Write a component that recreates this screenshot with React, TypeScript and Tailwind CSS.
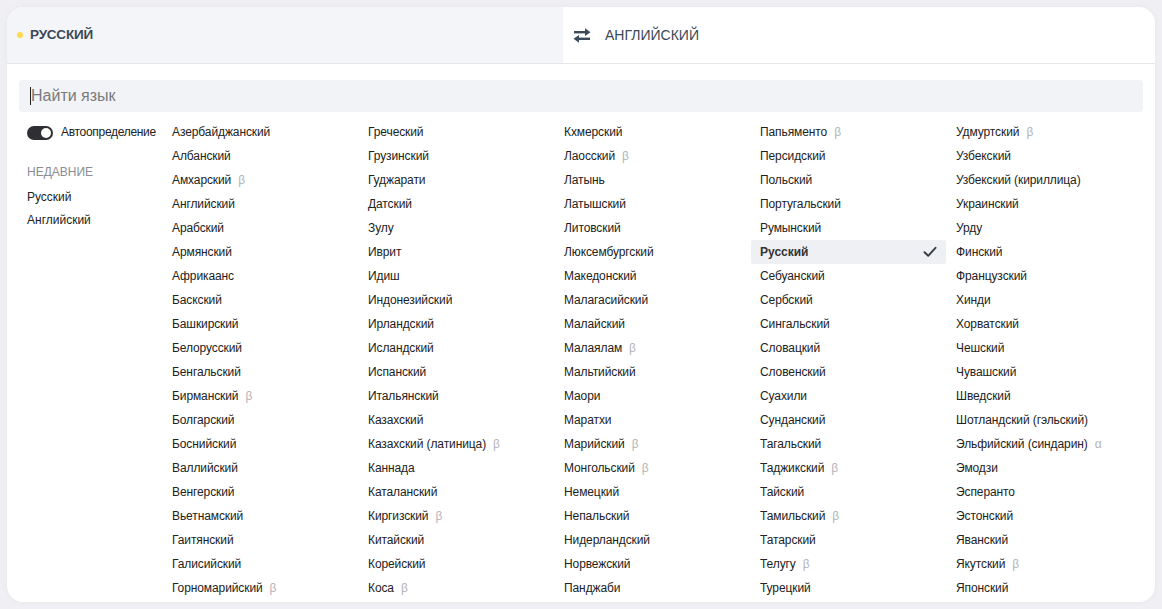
import React from 'react'

type Lang = { name: string; tag?: string; selected?: boolean }

const columns: Lang[][] = [
  [
    { name: 'Азербайджанский' },
    { name: 'Албанский' },
    { name: 'Амхарский', tag: 'β' },
    { name: 'Английский' },
    { name: 'Арабский' },
    { name: 'Армянский' },
    { name: 'Африкаанс' },
    { name: 'Баскский' },
    { name: 'Башкирский' },
    { name: 'Белорусский' },
    { name: 'Бенгальский' },
    { name: 'Бирманский', tag: 'β' },
    { name: 'Болгарский' },
    { name: 'Боснийский' },
    { name: 'Валлийский' },
    { name: 'Венгерский' },
    { name: 'Вьетнамский' },
    { name: 'Гаитянский' },
    { name: 'Галисийский' },
    { name: 'Горномарийский', tag: 'β' },
  ],
  [
    { name: 'Греческий' },
    { name: 'Грузинский' },
    { name: 'Гуджарати' },
    { name: 'Датский' },
    { name: 'Зулу' },
    { name: 'Иврит' },
    { name: 'Идиш' },
    { name: 'Индонезийский' },
    { name: 'Ирландский' },
    { name: 'Исландский' },
    { name: 'Испанский' },
    { name: 'Итальянский' },
    { name: 'Казахский' },
    { name: 'Казахский (латиница)', tag: 'β' },
    { name: 'Каннада' },
    { name: 'Каталанский' },
    { name: 'Киргизский', tag: 'β' },
    { name: 'Китайский' },
    { name: 'Корейский' },
    { name: 'Коса', tag: 'β' },
  ],
  [
    { name: 'Кхмерский' },
    { name: 'Лаосский', tag: 'β' },
    { name: 'Латынь' },
    { name: 'Латышский' },
    { name: 'Литовский' },
    { name: 'Люксембургский' },
    { name: 'Македонский' },
    { name: 'Малагасийский' },
    { name: 'Малайский' },
    { name: 'Малаялам', tag: 'β' },
    { name: 'Мальтийский' },
    { name: 'Маори' },
    { name: 'Маратхи' },
    { name: 'Марийский', tag: 'β' },
    { name: 'Монгольский', tag: 'β' },
    { name: 'Немецкий' },
    { name: 'Непальский' },
    { name: 'Нидерландский' },
    { name: 'Норвежский' },
    { name: 'Панджаби' },
  ],
  [
    { name: 'Папьяменто', tag: 'β' },
    { name: 'Персидский' },
    { name: 'Польский' },
    { name: 'Португальский' },
    { name: 'Румынский' },
    { name: 'Русский', selected: true },
    { name: 'Себуанский' },
    { name: 'Сербский' },
    { name: 'Сингальский' },
    { name: 'Словацкий' },
    { name: 'Словенский' },
    { name: 'Суахили' },
    { name: 'Сунданский' },
    { name: 'Тагальский' },
    { name: 'Таджикский', tag: 'β' },
    { name: 'Тайский' },
    { name: 'Тамильский', tag: 'β' },
    { name: 'Татарский' },
    { name: 'Телугу', tag: 'β' },
    { name: 'Турецкий' },
  ],
  [
    { name: 'Удмуртский', tag: 'β' },
    { name: 'Узбекский' },
    { name: 'Узбекский (кириллица)' },
    { name: 'Украинский' },
    { name: 'Урду' },
    { name: 'Финский' },
    { name: 'Французский' },
    { name: 'Хинди' },
    { name: 'Хорватский' },
    { name: 'Чешский' },
    { name: 'Чувашский' },
    { name: 'Шведский' },
    { name: 'Шотландский (гэльский)' },
    { name: 'Эльфийский (синдарин)', tag: 'α' },
    { name: 'Эмодзи' },
    { name: 'Эсперанто' },
    { name: 'Эстонский' },
    { name: 'Яванский' },
    { name: 'Якутский', tag: 'β' },
    { name: 'Японский' },
  ],
]

function SwapIcon() {
  return (
    <svg width="18" height="15" viewBox="0 0 18 15" fill="#3b4a5a">
      <rect x="1" y="3" width="12" height="2.4" />
      <path d="M12 0.3 L17.5 4.2 L12 8.1 Z" />
      <rect x="5" y="9.6" width="12" height="2.4" />
      <path d="M6 6.9 L0.5 10.8 L6 14.7 Z" />
    </svg>
  )
}

function CheckIcon() {
  return (
    <svg width="14" height="12" viewBox="0 0 14 12" fill="none">
      <path d="M1.5 6.2 L5.2 9.8 L12.5 1.8" stroke="#3a3f47" strokeWidth="2" strokeLinecap="round" strokeLinejoin="round" />
    </svg>
  )
}

export default function App() {
  return (
    <div
      className="w-[1162px] h-[609px] bg-[#efeff4] pt-[7px] pl-[7px] pr-[7px] overflow-hidden"
      style={{ fontFamily: '"Liberation Sans", Arial, sans-serif' }}
    >
      <div className="bg-white rounded-[16px] h-[595px] overflow-hidden shadow-[0_0_6px_rgba(0,0,0,0.04)]">
        {/* tabs */}
        <div className="flex h-[57px] border-b border-[#e6e7eb]">
          <div className="w-[556px] bg-[#f4f5f8] flex items-center pl-[10px] gap-[7px]">
            <span className="w-[6px] h-[6px] rounded-full bg-[#ffd84d]" />
            <span className="text-[13.5px] font-semibold text-[#3b4856] tracking-[-0.2px]">РУССКИЙ</span>
          </div>
          <div className="flex-1 flex items-center pl-[10px] gap-[14px]">
            <SwapIcon />
            <span className="text-[14px] text-[#3b4856]">АНГЛИЙСКИЙ</span>
          </div>
        </div>

        <div className="px-[12px] pt-[16px]">
          {/* search */}
          <div className="h-[32px] bg-[#f2f3f7] rounded-[4px] flex items-center pl-[11px]">
            <span className="w-px h-[18px] bg-[#222]" />
            <span className="text-[16px] text-[#7a7a7a]">Найти язык</span>
          </div>

          <div className="flex pt-[8px]">
            {/* sidebar */}
            <div className="w-[144px] pl-[8px] shrink-0">
              <div className="h-[24px] flex items-center gap-[8px]">
                <span className="w-[26px] h-[14px] rounded-full bg-[#2f2f33] flex items-center justify-end pr-[2px] translate-y-[1px]">
                  <span className="w-[10px] h-[10px] rounded-full bg-white" />
                </span>
                <span className="text-[12px] text-[#222] tracking-[-0.3px]">Автоопределение</span>
              </div>
              <div className="mt-[20px] text-[12px] text-[#8a8d94] leading-[16px]">НЕДАВНИЕ</div>
              <div className="mt-[5px] h-[24px] flex items-center text-[12px] text-[#222]">Русский</div>
              <div className="h-[22px] flex items-center text-[12px] text-[#222]">Английский</div>
            </div>

            {/* languages */}
            <div className="flex">
              {columns.map((col, ci) => (
                <div key={ci} className="w-[196px] flex flex-col">
                  {col.map((l) => (
                    <div
                      key={l.name}
                      className={
                        l.selected
                          ? 'h-[24px] w-[195px] flex items-center justify-between pl-[9px] pr-[9px] bg-[#eff0f4] rounded-[2px] text-[12px] font-bold text-[#333]'
                          : 'h-[24px] flex items-center pl-[9px] text-[12px] text-[#222] tracking-[-0.1px]'
                      }
                    >
                      <span>
                        {l.name}
                        {l.tag && <span className="ml-[7px] text-[#b3b5ba]">{l.tag}</span>}
                      </span>
                      {l.selected && <CheckIcon />}
                    </div>
                  ))}
                </div>
              ))}
            </div>
          </div>
        </div>
      </div>
    </div>
  )
}
